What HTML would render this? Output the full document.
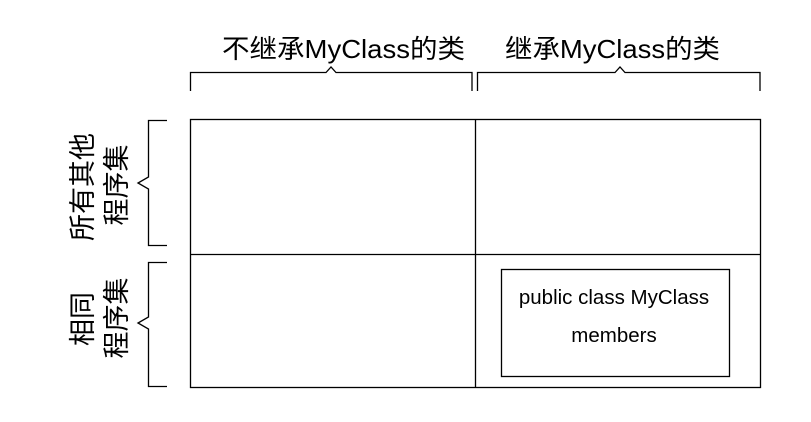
<!DOCTYPE html>
<html><head><meta charset="utf-8"><style>
html,body{margin:0;padding:0;background:#fff;width:811px;height:422px;overflow:hidden}
svg{display:block}
text{font-family:"Liberation Sans","Noto Sans CJK SC",sans-serif;fill:#000}
</style></head><body>
<svg width="811" height="422" viewBox="0 0 811 422">
<g fill="none" stroke="#000" stroke-width="1.3">
<path d="M190.5 91V72.5H326L331 67L336 72.5H472V91"/>
<path d="M477.5 91V72.5H615L620 67L625 72.5H760V91"/>
<path d="M167 120.5H148.5V177L138 183L148.5 189V245.5H167"/>
<path d="M167 262.5H148.5V317L138 323L148.5 329V386.5H167"/>
<rect x="190.5" y="119.5" width="570" height="268"/>
<path d="M475.5 119.5V387.5M190.5 254.5H760.5"/>
<rect x="501.5" y="269.5" width="228" height="107"/>
</g>
<text x="222" y="58" font-size="26" textLength="243" lengthAdjust="spacingAndGlyphs">不继承MyClass的类</text>
<text x="505" y="58" font-size="26" textLength="215" lengthAdjust="spacingAndGlyphs">继承MyClass的类</text>
<text x="614" y="304" font-size="20.5" text-anchor="middle">public class MyClass</text>
<text x="614" y="342" font-size="20.5" text-anchor="middle">members</text>
<text transform="translate(92,187) rotate(-90)" font-size="27" text-anchor="middle">所有其他</text>
<text transform="translate(126,185) rotate(-90)" font-size="27" text-anchor="middle">程序集</text>
<text transform="translate(92,319) rotate(-90)" font-size="27" text-anchor="middle">相同</text>
<text transform="translate(126,318) rotate(-90)" font-size="27" text-anchor="middle">程序集</text>
</svg>
</body></html>
